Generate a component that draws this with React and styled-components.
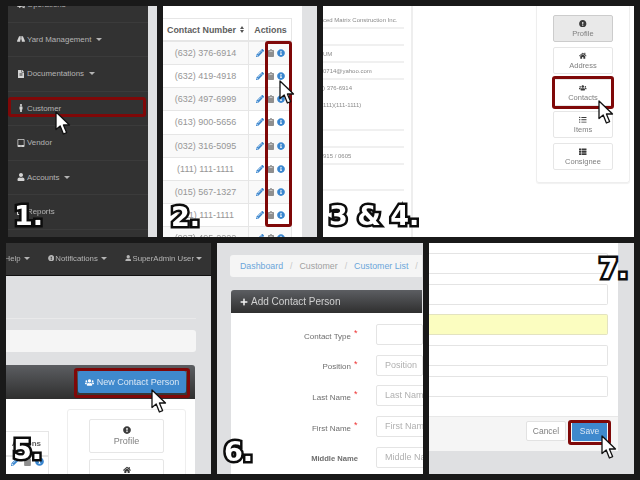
import React from 'react';
import styled, { createGlobalStyle } from 'styled-components';
import {
  FaRoad, FaFileAlt, FaMale, FaTabletAlt, FaUser, FaChartBar, FaCogs, FaPencilAlt, FaClipboard,
  FaInfoCircle, FaHome, FaUsers, FaListUl, FaThList, FaPlus, FaExclamationCircle,
} from 'react-icons/fa';

const GlobalStyle = createGlobalStyle`
  html, body { margin: 0; padding: 0; background: #191919; }
  body { font-family: "Liberation Sans", Arial, sans-serif; }
`;

const Sheet = styled.div`
  width: 640px;
  height: 480px;
  padding-top: 6px;
  box-sizing: border-box;
  display: flex;
  flex-direction: column;
  gap: 6px;
  overflow: hidden;
`;

const Strip = styled.div`
  display: flex;
  gap: 6px;
  height: 231px;
  padding-left: ${p => p.$left}px;
`;

const Panel = styled.div`
  position: relative;
  width: ${p => p.$w}px;
  height: 231px;
  overflow: hidden;
  background: ${p => p.$bg || '#fff'};
`;

const Shot = styled.div`
  width: 100%;
  height: 100%;
  opacity: 0.999;
  filter: blur(0.35px);
  display: flex;
  flex-direction: column;
`;

const Highlight = styled.div`
  position: absolute;
  left: ${p => p.$x}px;
  top: ${p => p.$y}px;
  width: ${p => p.$w}px;
  height: ${p => p.$h}px;
  box-sizing: border-box;
  border: 3px solid #7f0808;
  border-radius: 3px;
`;

const Numeral = styled.div`
  position: absolute;
  left: ${p => p.$x}px;
  top: ${p => p.$y}px;
  font-family: "DejaVu Sans", sans-serif;
  font-weight: bold;
  font-size: 27px;
  line-height: 30px;
  white-space: nowrap;
  color: #fff;
  -webkit-text-stroke: 5px #0c0c0c;
  paint-order: stroke fill;
`;

const CursorSvg = styled.svg`
  position: absolute;
  left: ${p => p.$x}px;
  top: ${p => p.$y}px;
`;

function Cursor({ x, y }) {
  return (
    <CursorSvg $x={x} $y={y} width="17" height="25" viewBox="0 0 17 25">
      <path d="M1 1 L1 18.5 L5.2 15 L8.4 23 L11.6 21.6 L8.4 14 L14.5 14 Z" fill="#fff" stroke="#111" strokeWidth="1.3" strokeLinejoin="round" />
    </CursorSvg>
  );
}

const Caret = styled.span`
  display: inline-block;
  margin-left: ${p => p.$gap ?? 3}px;
  vertical-align: 1px;
  border-left: 3px solid transparent;
  border-right: 3px solid transparent;
  border-top: 3px solid currentColor;
`;

/* panel 1 */
const SideWrap = styled.div`
  display: flex;
  height: 100%;
`;

const SideNav = styled.div`
  width: 140px;
  background: #333;
  margin-top: -18px;
  height: 260px;
`;

const SideGutter = styled.div`
  flex: 1;
  background: #e1e2e4;
`;

const SideRow = styled.div`
  height: 34.5px;
  box-sizing: border-box;
  border-bottom: 1px solid #3c3c3c;
  padding-left: 9px;
  display: flex;
  align-items: center;
  gap: 2px;
  color: #b5b5b5;
  font-size: 7.9px;
  svg { height: 8px; width: auto; color: #d5d5d5; }
`;

/* panel 2 */
const TableArea = styled.div`
  display: flex;
  height: 100%;
`;

const TableWrap = styled.div`
  width: 139px;
  padding-top: 12px;
  box-sizing: border-box;
  background: #fff;
`;

const Gutter = styled.div`
  flex: 1;
  background: #e1e2e4;
`;

const Row = styled.div`
  display: grid;
  grid-template-columns: 85px 44px;
  width: 129px;
  height: ${p => (p.$head ? 24 : 23.15)}px;
  box-sizing: border-box;
  background: ${p => (p.$odd ? '#f9f9f9' : '#fff')};
  border-bottom: ${p => (p.$head ? 2 : 1)}px solid #e6e6e6;
  border-right: 1px solid #e6e6e6;
  border-top: ${p => (p.$head ? '1px solid #e6e6e6' : 'none')};
`;

const Cell = styled.div`
  display: flex;
  align-items: center;
  justify-content: center;
  gap: 2px;
  font-size: ${p => (p.$head ? 8.9 : 9)}px;
  font-weight: ${p => (p.$head ? 'bold' : 'normal')};
  color: ${p => (p.$head ? '#5e5e5e' : '#969696')};
  white-space: nowrap;
  & + & { border-left: 1px solid #e6e6e6; }
`;

const Sort = styled.span`
  display: inline-flex;
  flex-direction: column;
  gap: 1px;
  margin-left: 2px;
  i {
    display: block;
    border-left: 2.5px solid transparent;
    border-right: 2.5px solid transparent;
  }
  i:first-child { border-bottom: 3px solid #555; }
  i:last-child { border-top: 3px solid #555; }
`;

const ActionIcons = styled.span`
  display: flex;
  align-items: center;
  justify-content: center;
  gap: ${p => p.$gap || 2.5}px;
  font-size: ${p => p.$size || 8}px;
  svg:first-child, svg:last-child { color: #3a86cf; }
  svg:nth-child(2) { color: #8f8f8f; }
`;

const contacts = ['(632) 376-6914', '(632) 419-4918', '(632) 497-6999', '(613) 900-5656', '(032) 316-5095', '(111) 111-1111', '(015) 567-1327', '(111) 111-1111', '(997) 495-2222'];

/* panel 3 */
const ProfileArea = styled.div`
  display: flex;
  height: 100%;
`;

const Details = styled.div`
  width: 90px;
  flex: none;
  box-sizing: border-box;
  border-right: 2px solid #eee;
  padding-right: 7px;
`;

const DetailRow = styled.div`
  height: ${p => p.$h || 17}px;
  box-sizing: border-box;
  padding-top: ${p => p.$pad || 0}px;
  border-bottom: 2px solid #f0f0f0;
  font-size: 6px;
  line-height: 17px;
  color: #8a8a8a;
  white-space: nowrap;
  overflow: hidden;
`;

const SideCard = styled.div`
  margin-left: auto;
  margin-right: 4px;
  width: 94px;
  height: 177px;
  box-sizing: border-box;
  padding-top: 9px;
  border: 1px solid #eee;
  border-top: none;
  border-radius: 0 0 3px 3px;
  box-shadow: 0 1px 1px rgba(0, 0, 0, 0.06);
  display: flex;
  flex-direction: column;
  align-items: center;
  gap: 5px;
`;

const TabButton = styled.div`
  width: ${p => p.$w || 60}px;
  height: ${p => p.$h || 27}px;
  flex: none;
  box-sizing: border-box;
  border: 1px solid ${p => (p.$active ? '#ccc' : '#e6e6e6')};
  border-radius: 2px;
  background: ${p => (p.$active ? '#e9e9e9' : '#fff')};
  color: #808080;
  font-size: ${p => p.$size || 7.5}px;
  display: flex;
  flex-direction: column;
  align-items: center;
  justify-content: center;
  gap: 3px;
  line-height: 1;
  svg { color: #3b3b3b; height: ${p => p.$icon || 7.5}px; width: auto; }
`;

/* panel 4 */
const TopBar = styled.div`
  height: 33px;
  flex: none;
  box-sizing: border-box;
  background: #333;
  border-bottom: 1px solid #111;
  display: flex;
  align-items: center;
  justify-content: flex-end;
  gap: 18px;
  padding: 0 9px 2px 0;
  color: #b5b5b5;
  font-size: 7.8px;
  white-space: nowrap;
  svg { font-size: 6.5px; margin-right: 1px; vertical-align: -0.5px; }
`;

const NoteLine = styled.div`
  height: 1px;
  flex: none;
  margin: 42px 15px 11px 0;
  background: #e9e9ea;
`;

const Crumbs = styled.div`
  height: 22px;
  flex: none;
  box-sizing: border-box;
  margin: ${p => p.$top || 0}px ${p => p.$right || 15}px 0 ${p => p.$left || 0}px;
  padding-left: ${p => (p.$left ? 10 : 0)}px;
  background: #f5f5f5;
  border-radius: ${p => (p.$left ? '3px 0 0 3px' : '0 3px 3px 0')};
  display: flex;
  align-items: center;
  gap: 7px;
  font-size: 8.8px;
  color: #a0a0a0;
  white-space: nowrap;
  a { color: #6ba5da; }
  i { font-style: normal; color: #c8c8c8; }
`;

const PanelHead = styled.div`
  flex: none;
  height: ${p => p.$h}px;
  margin-top: 13px;
  margin-right: ${p => p.$right || 16}px;
  margin-left: ${p => p.$left || 0}px;
  box-sizing: border-box;
  background: linear-gradient(#5c5e62, #2f2f2f);
  border-radius: ${p => (p.$left ? '3px 0 0 0' : '0 3px 0 0')};
  display: flex;
  align-items: center;
  justify-content: ${p => (p.$left ? 'flex-start' : 'flex-end')};
  padding: ${p => (p.$left ? '0 0 0 9px' : '0 9px 0 0')};
  color: #d0d0d0;
  font-size: 10px;
  gap: 3px;
  svg { color: #f2f2f2; }
`;

const BlueButton = styled.div`
  width: 108px;
  height: 22px;
  box-sizing: border-box;
  background: #3f89cd;
  border-radius: 2px;
  color: #dbe8f5;
  font-size: 9px;
  display: flex;
  align-items: center;
  justify-content: center;
  gap: 3px;
  svg { color: #fff; height: 9px; width: auto; }
`;

const ListBody = styled.div`
  flex: 1;
  margin-right: 16px;
  background: #fff;
  display: flex;
  min-height: 0;
`;

const MiniTable = styled.div`
  width: 42px;
  margin-top: 32px;
  height: 48px;
  border: 1px solid #e6e6e6;
  border-left: none;
  color: #5e5e5e;
  font-size: 8px;
  font-weight: bold;
`;

const MiniHead = styled.div`
  height: 23px;
  line-height: 23px;
  text-align: right;
  padding-right: 7px;
  border-bottom: 2px solid #e6e6e6;
`;

const MiniCard = styled.div`
  margin: 10px 9px 0 auto;
  width: 119px;
  height: 90px;
  box-sizing: border-box;
  border: 1px solid #eee;
  border-radius: 3px;
  padding-top: 9px;
  display: flex;
  flex-direction: column;
  align-items: center;
  gap: 6px;
`;

/* panel 5 */
const FormBody = styled.div`
  flex: 1;
  margin-left: 14px;
  background: #fff;
  padding-top: 11px;
  display: flex;
  flex-direction: column;
  gap: 9.7px;
  min-height: 0;
`;

const FormRow = styled.div`
  display: grid;
  grid-template-columns: ${p => (p.$plain ? '127px 18px' : '120px 25px')} 1fr;
  align-items: center;
  height: 21px;
`;

const FormLabel = styled.label`
  justify-self: end;
  position: relative;
  top: 1.5px;
  font-size: ${p => (p.$plain ? 7.6 : 8)}px;
  color: #6e6e6e;
  font-weight: ${p => (p.$plain ? 'bold' : 'normal')};
  white-space: nowrap;
`;

const Star = styled.span`
  color: #e33;
  font-size: 9px;
  padding-left: 3px;
  align-self: start;
  line-height: 19px;
`;

const TextBox = styled.div`
  height: 21px;
  box-sizing: border-box;
  border: 1px solid ${p => (p.$fill ? '#e3e3c0' : '#e4e4e4')};
  border-radius: 2px;
  background: ${p => (p.$fill ? '#fbfdc0' : '#fff')};
  color: #b0b0b0;
  font-size: 9px;
  line-height: 19px;
  padding-left: 8px;
  white-space: nowrap;
`;

const fields = [
  { label: 'Contact Type', star: true, hint: '' },
  { label: 'Position', star: true, hint: 'Position' },
  { label: 'Last Name', star: true, hint: 'Last Name' },
  { label: 'First Name', star: true, hint: 'First Name' },
  { label: 'Middle Name', star: false, hint: 'Middle Name' },
];

/* panel 6 */
const SaveArea = styled.div`
  display: flex;
  flex-direction: column;
  width: 189px;
  height: 208px;
  background: #fff;
`;

const SaveFields = styled.div`
  flex: 1;
  padding: 10px 10px 0 0;
  display: flex;
  flex-direction: column;
  gap: 9.7px;
`;

const SaveBox = styled(TextBox)`
  border-left: none;
  border-radius: 0 2px 2px 0;
`;

const SaveFoot = styled.div`
  height: 35px;
  box-sizing: border-box;
  border-top: 1px solid #e8e8e8;
  background: #f5f5f5;
  display: flex;
  justify-content: flex-end;
  align-items: center;
  gap: 6px;
  padding: 0 11px 7px 0;
`;

const FootButton = styled.div`
  width: ${p => p.$w}px;
  height: 20px;
  box-sizing: border-box;
  border-radius: 2px;
  font-size: 8.5px;
  display: flex;
  align-items: center;
  justify-content: center;
  background: ${p => (p.$primary ? '#3f89cd' : '#fff')};
  border: 1px solid ${p => (p.$primary ? '#3f89cd' : '#e2e2e2')};
  color: ${p => (p.$primary ? '#dbe8f5' : '#808080')};
`;

export default function App() {
  return (
    <Sheet>
      <GlobalStyle />
      <Strip $left={8}>
        <Panel $w={149} $bg="#333">
          <Shot>
            <SideWrap>
              <SideNav>
                <SideRow><FaCogs /> Operations <Caret /></SideRow>
                <SideRow><FaRoad /> Yard Management <Caret /></SideRow>
                <SideRow><FaFileAlt /> Documentations <Caret /></SideRow>
                <SideRow><FaMale /> Customer</SideRow>
                <SideRow><FaTabletAlt /> Vendor</SideRow>
                <SideRow><FaUser /> Accounts <Caret /></SideRow>
                <SideRow><FaChartBar /> Reports</SideRow>
                <SideRow />
              </SideNav>
              <SideGutter />
            </SideWrap>
          </Shot>
          <Highlight $x={0} $y={91} $w={138} $h={20} />
          <Cursor x={47} y={105} />
          <Numeral $x={6} $y={195}>1.</Numeral>
        </Panel>

        <Panel $w={154}>
          <Shot>
            <TableArea>
              <TableWrap>
                <Row $head>
                  <Cell $head>Contact Number<Sort><i /><i /></Sort></Cell>
                  <Cell $head>Actions</Cell>
                </Row>
                {contacts.map((phone, i) => (
                  <Row key={i} $odd={i % 2 === 0}>
                    <Cell>{phone}</Cell>
                    <Cell>
                      <ActionIcons><FaPencilAlt /><FaClipboard /><FaInfoCircle /></ActionIcons>
                    </Cell>
                  </Row>
                ))}
              </TableWrap>
              <Gutter />
            </TableArea>
          </Shot>
          <Highlight $x={102} $y={35} $w={27} $h={186} />
          <Cursor x={116} y={74} />
          <Numeral $x={8} $y={196}>2.</Numeral>
        </Panel>

        <Panel $w={311}>
          <Shot>
            <ProfileArea>
              <Details>
                <DetailRow $h={23} $pad={6}>ced Matrix Construction Inc.</DetailRow>
                <DetailRow />
                <DetailRow>UM</DetailRow>
                <DetailRow>0714@yahoo.com</DetailRow>
                <DetailRow $h={51}>) 376-6914<br />111)(111-1111)</DetailRow>
                <DetailRow />
                <DetailRow>915 / 0605</DetailRow>
                <DetailRow $h={26} />
              </Details>
              <SideCard>
                <TabButton $active><FaExclamationCircle />Profile</TabButton>
                <TabButton><FaHome />Address</TabButton>
                <TabButton><FaUsers />Contacts</TabButton>
                <TabButton><FaListUl />Items</TabButton>
                <TabButton><FaThList />Consignee</TabButton>
              </SideCard>
            </ProfileArea>
          </Shot>
          <Highlight $x={229} $y={70} $w={62} $h={33} />
          <Cursor x={275} y={94} />
          <Numeral $x={6} $y={195}>3 &amp; 4.</Numeral>
        </Panel>
      </Strip>

      <Strip $left={6}>
        <Panel $w={205} $bg="#dfe0e2">
          <Shot>
            <TopBar>
              <span>Help <Caret $gap={1} /></span>
              <span><FaExclamationCircle />Notifications <Caret $gap={1} /></span>
              <span><FaUser />SuperAdmin User<Caret $gap={2} /></span>
            </TopBar>
            <NoteLine />
            <Crumbs />
            <PanelHead $h={34}>
              <BlueButton><FaUsers /> New Contact Person</BlueButton>
            </PanelHead>
            <ListBody>
              <MiniTable>
                <MiniHead>Actions</MiniHead>
                <ActionIcons $gap={3} $size={9}><FaPencilAlt /><FaClipboard /><FaInfoCircle /></ActionIcons>
              </MiniTable>
              <MiniCard>
                <TabButton $w={75} $h={34} $size={9} $icon={8}><FaExclamationCircle />Profile</TabButton>
                <TabButton $w={75} $h={34} $size={9} $icon={8}><FaHome />Address</TabButton>
              </MiniCard>
            </ListBody>
          </Shot>
          <Highlight $x={68} $y={125} $w={116} $h={30} />
          <Cursor x={145} y={146} />
          <Numeral $x={7} $y={192}>5.</Numeral>
        </Panel>

        <Panel $w={206} $bg="#dfe0e2">
          <Shot>
            <Crumbs $top={12} $left={13} $right={1}>
              <a>Dashboard</a><i>/</i><span>Customer</span><i>/</i><a>Customer List</a><i>/</i>
            </Crumbs>
            <PanelHead $h={23} $left={14} $right={1}><FaPlus size={8} /> Add Contact Person</PanelHead>
            <FormBody>
              {fields.map(f => (
                <FormRow key={f.label} $plain={!f.star}>
                  <FormLabel $plain={!f.star}>{f.label}</FormLabel>
                  {f.star ? <Star>*</Star> : <span />}
                  <TextBox>{f.hint}</TextBox>
                </FormRow>
              ))}
            </FormBody>
          </Shot>
          <Numeral $x={7} $y={194}>6.</Numeral>
        </Panel>

        <Panel $w={205} $bg="#dfe0e2">
          <Shot>
            <SaveArea>
              <SaveFields>
                <SaveBox />
                <SaveBox />
                <SaveBox $fill />
                <SaveBox />
                <SaveBox />
              </SaveFields>
              <SaveFoot>
                <FootButton $w={40}>Cancel</FootButton>
                <FootButton $w={35} $primary>Save</FootButton>
              </SaveFoot>
            </SaveArea>
          </Shot>
          <Highlight $x={139} $y={177} $w={43} $h={25} />
          <Cursor x={172} y={192} />
          <Numeral $x={170} $y={11}>7.</Numeral>
        </Panel>
      </Strip>
    </Sheet>
  );
}
